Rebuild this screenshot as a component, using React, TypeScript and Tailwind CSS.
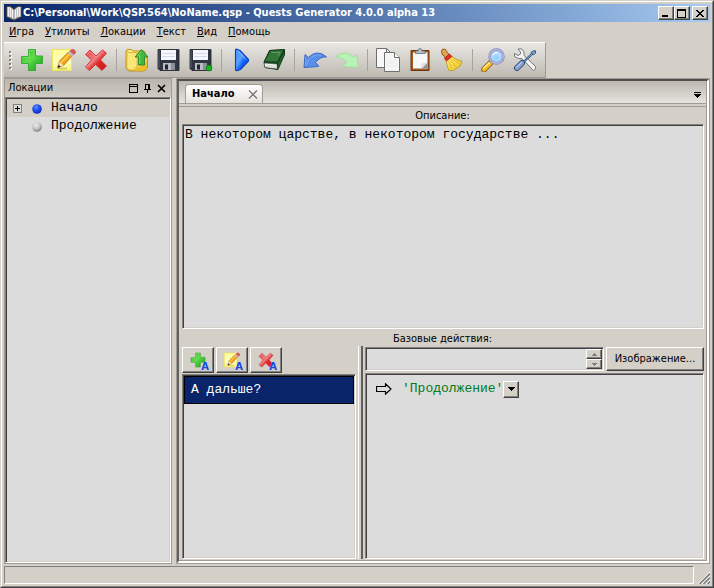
import { useState } from 'react'
import type { ReactNode } from 'react'

// Classic 3D edges
const RAISED = 'border border-t-white border-l-white border-r-[#404040] border-b-[#404040] shadow-[inset_-1px_-1px_0_#808080]'
const SUNKEN = 'border border-t-[#808080] border-l-[#808080] border-r-white border-b-white shadow-[inset_1px_1px_0_#404040,inset_-1px_-1px_0_#d4d0c8]'
const UI_FONT = "font-['DejaVu_Sans_Condensed','DejaVu_Sans',sans-serif]"
const MONO_FONT = "font-['Liberation_Mono','Courier_New',monospace]"

function Svg({ size = 24, children }: { size?: number; children: ReactNode }) {
  return (
    <svg width={size} height={size} viewBox="0 0 24 24" aria-hidden="true" className="block shrink-0">
      {children}
    </svg>
  )
}

const Defs = () => (
  <svg width="0" height="0" className="absolute" aria-hidden="true">
    <defs>
      <linearGradient id="green" x1="0" y1="0" x2="1" y2="1">
        <stop offset="0" stopColor="#2fb52e" />
        <stop offset=".45" stopColor="#63dc4c" />
        <stop offset=".65" stopColor="#3fc436" />
        <stop offset="1" stopColor="#1f9c22" />
      </linearGradient>
      <linearGradient id="red" x1="0" y1="0" x2="1" y2="1">
        <stop offset="0" stopColor="#e2484c" />
        <stop offset=".45" stopColor="#f07b7b" />
        <stop offset=".6" stopColor="#dc2a2c" />
        <stop offset="1" stopColor="#cf1013" />
      </linearGradient>
      <linearGradient id="note" x1="0" y1="0" x2="0" y2="1">
        <stop offset="0" stopColor="#fdfd9a" />
        <stop offset=".6" stopColor="#fdfdc0" />
        <stop offset="1" stopColor="#f8f27a" />
      </linearGradient>
      <linearGradient id="gold" x1="0" y1="0" x2="1" y2="1">
        <stop offset="0" stopColor="#fdf08a" />
        <stop offset="1" stopColor="#f0c02c" />
      </linearGradient>
      <linearGradient id="blue" x1="0" y1="0" x2="1" y2="1">
        <stop offset="0" stopColor="#3d8bff" />
        <stop offset=".4" stopColor="#5aa4ff" />
        <stop offset=".6" stopColor="#1262f5" />
        <stop offset="1" stopColor="#0a55ee" />
      </linearGradient>
      <linearGradient id="broom" x1="0" y1="0" x2="1" y2="1">
        <stop offset="0" stopColor="#fff07a" />
        <stop offset="1" stopColor="#efc51c" />
      </linearGradient>
      <radialGradient id="lens" cx=".5" cy=".6" r=".6">
        <stop offset="0" stopColor="#8accff" />
        <stop offset="1" stopColor="#d4ecff" />
      </radialGradient>
      <radialGradient id="ballBlue" cx=".4" cy=".3" r=".7">
        <stop offset="0" stopColor="#5f8cff" />
        <stop offset=".5" stopColor="#1f50f0" />
        <stop offset="1" stopColor="#0a2bb8" />
      </radialGradient>
      <radialGradient id="ballGray" cx=".4" cy=".3" r=".7">
        <stop offset="0" stopColor="#ececec" />
        <stop offset=".6" stopColor="#c0c0c0" />
        <stop offset="1" stopColor="#808080" />
      </radialGradient>
    </defs>
  </svg>
)

const AddIcon = ({ size }: { size?: number }) => (
  <Svg size={size}>
    <path d="M8.500 1.500H15.500V8H22.500V15.500H15.500V22.500H8.500V15.500H1.500V8.500H8.500z" fill="url(#green)" stroke="#2fa82f" strokeWidth=".9" />
    <path d="M9.500 9.500V2.500H14.500M2.500 9.500H9.500" fill="none" stroke="#7fe06c" strokeWidth=".8" />
  </Svg>
)

const EditIcon = ({ size }: { size?: number }) => (
  <Svg size={size}>
    <path d="M.5 1.500H19.500V22.500H.5z" fill="url(#note)" stroke="#ebe25a" />
    <path d="M6 20.500h9" stroke="#cfc66a" strokeWidth="1.500" />
    <path d="M5.500 20L7.500 13L16.500 4L20.500 7.500L11.500 17.500z" fill="#f5a31c" stroke="#a8690f" strokeWidth=".7" />
    <path d="M9 14.500L18 5.500" stroke="#ffd35c" strokeWidth="1.500" />
    <path d="M5.500 20L7.500 13.500L11.500 17.500z" fill="#f6dfb4" />
    <path d="M5.500 20L6.500 16.800L8.800 18.800z" fill="#222" />
    <path d="M16 4.500L18 2.500L22 6L20 8.500z" fill="#b4bccb" />
    <path d="M18 2.800Q20.500 .5 22.700 2.300T22 6.500z" fill="#e4525a" stroke="#b93840" strokeWidth=".6" />
  </Svg>
)

const DeleteIcon = ({ size }: { size?: number }) => (
  <Svg size={size}>
    <path
      d="M1.500 6.500L6 2L12 8L18.500 2L22.500 5L16.500 12L22.500 18L18 22.500L11.500 16.500L5.500 22.500L1.500 19L7.500 12z"
      fill="url(#red)"
      stroke="#d63a3e"
      strokeWidth="1"
      strokeLinejoin="round"
    />
    <path d="M3 6.500L6 3.500L12 9.500L18.500 3.500M3 19L9 12.500" fill="none" stroke="#f49a9a" strokeWidth=".8" />
  </Svg>
)

const OpenIcon = () => (
  <Svg>
    <path d="M1 3L2 1.500H6.500L8 3H19L20 4.500V8L22.500 10V20L19 23H4L1 20.500z" fill="url(#gold)" stroke="#c0921a" strokeWidth="1" />
    <path d="M2 3L4 4.500H12V20L10 22H4L1.800 20z" fill="#fbe778" stroke="#cfa12a" strokeWidth=".7" />
    <path d="M9.500 19Q14 21 18 17L22 14V20L19 22.500H10z" fill="#f0c02c" />
    <path d="M16.500 1.500L23 9H19.500V17H13.500V9H10z" fill="#40b83c" stroke="#23872a" strokeWidth=".9" />
    <path d="M16.500 3.500L12.800 8H14.800V16" stroke="#86dd74" fill="none" strokeWidth=".9" />
  </Svg>
)

const Disk = () => (
  <>
    <path d="M1 1.500H22V22.500H3L1 20.500z" fill="#303642" stroke="#1c2028" strokeWidth=".8" />
    <path d="M2 2.500V20" stroke="#59616e" />
    <path d="M4 2H19V12H4z" fill="#f6f8fc" />
    <path d="M5 5.500H18M5 8.500H18" stroke="#d3dbea" />
    <path d="M6 15H18V22H6z" fill="#b9bcc2" />
    <path d="M14 15H18V22H14z" fill="#8c9099" />
    <path d="M8 16.500H11V21.500H8z" fill="#20242c" />
  </>
)

const SaveIcon = () => (
  <Svg>
    <Disk />
  </Svg>
)

const SaveAsIcon = () => (
  <Svg>
    <Disk />
    <circle cx="20" cy="20" r="2.900" fill="#18b51c" stroke="#0d7d10" strokeWidth=".8" />
  </Svg>
)

const PlayIcon = () => (
  <Svg>
    <path d="M5.500 2Q5.500 .8 7 1.300L10 2.500L18.500 11.500V13L10.500 21.500L7 22.800Q5.500 23 5.500 21.500z" fill="url(#blue)" stroke="#0a3bc0" strokeWidth="1.100" />
    <path d="M7 3Q12 6 16 11.500" stroke="#8fc0ff" fill="none" strokeWidth=".9" />
  </Svg>
)

const BookIcon = () => (
  <Svg>
    <path d="M2 14L7.500 2.500L22.500 1.500V6L15.500 21.500L3 19.500z" fill="#184b22" stroke="#0b2811" strokeWidth=".9" />
    <path d="M8 2.500L22 1.800L15.500 14L2.500 13.500z" fill="#34753a" stroke="#123a19" strokeWidth=".8" />
    <path d="M9.500 4.500H18L16 8" stroke="#5f9a62" fill="none" />
    <path d="M2.500 15L15 16L15.500 21L3.500 19.500Q1.500 17 2.500 15z" fill="#f4f4ef" stroke="#3b493c" strokeWidth=".6" />
    <path d="M4 17L15 18.200M4 18.500L15 19.700" stroke="#b5bab0" strokeWidth=".5" />
    <path d="M15.500 15L22.500 3V7L16 21.500z" fill="#255f2d" stroke="#0f3216" strokeWidth=".6" />
  </Svg>
)

const Curve = 'M2 6.500L5.500 9.500Q9 5.500 14 5T23.500 9Q17 8.500 12.500 14.500L15.500 17.500V18.500L1 19.500z'

const UndoIcon = () => (
  <Svg>
    <path d={Curve} fill="#5a8ee8" stroke="#3560c4" strokeWidth=".9" strokeLinejoin="round" />
    <path d="M2.800 9V17.500L6 11.500Q11 6 18 7" fill="none" stroke="#83aef5" strokeWidth=".8" />
  </Svg>
)

const RedoIcon = () => (
  <Svg>
    <g transform="matrix(-1 0 0 1 24 0)">
      <path d={Curve} fill="#b8f2b4" stroke="#9cdc98" strokeWidth=".9" strokeLinejoin="round" />
    </g>
  </Svg>
)

const CopyIcon = () => (
  <Svg>
    <path d="M.5 .5H10.500L14.500 4.500V19.500H.5z" fill="#f8f8f8" stroke="#6e6e6e" />
    <path d="M10.500 .5V4.500H14.500" fill="none" stroke="#6e6e6e" />
    <path d="M8.500 4.500H18.500L23.500 9.500V23.500H8.500z" fill="#f5f5f5" stroke="#6e6e6e" />
    <path d="M18.500 4.500V9.500H23.500" fill="#fff" stroke="#6e6e6e" />
    <path d="M11 12H21M11 15H21M11 18H21" stroke="#ececec" />
  </Svg>
)

const PasteIcon = () => (
  <Svg>
    <path d="M3 2.500H21V22.500H3z" fill="#a5581c" stroke="#6c350c" />
    <path d="M5 4.500H19.500V20.500H5z" fill="#f7f7f7" />
    <path d="M13.500 20.500L19.500 14.500V20.500z" fill="#8f959d" />
    <path d="M13.500 20.500V15.500L19.500 14.500z" fill="#dcdfe3" />
    <path d="M7.500 5.500V3H10Q10 .5 12 .5T14 3H17V5.500z" fill="#b9bec6" stroke="#636973" strokeWidth=".8" />
  </Svg>
)

const BroomIcon = () => (
  <Svg>
    <path d="M1.500 4L2 1.500L5 1L9 6.500L5 10Q4.500 7 2.500 7z" fill="#e0a254" stroke="#91571b" strokeWidth=".9" />
    <path d="M6 13L11 8Q16 12 22 13.500L20 18L13 22.500H9Q7 18 6 13z" fill="url(#broom)" stroke="#c09a18" strokeWidth=".9" />
    <path d="M8.500 13L12 21M10.500 11.500L16 19M12.500 11L19.500 16" stroke="#d9b021" strokeWidth=".8" fill="none" />
    <path d="M4.500 10.500L9.500 6L12 8.500L6.500 13z" fill="#ec2c22" stroke="#9d1a14" strokeWidth=".7" />
  </Svg>
)

const SearchIcon = () => (
  <Svg>
    <path d="M3 21.500L9 15.500" stroke="#85601c" strokeWidth="6" strokeLinecap="round" />
    <path d="M3 21.500L9 15.500" stroke="#f2b622" strokeWidth="4.400" strokeLinecap="round" />
    <path d="M2.500 20.500L8.500 14.500" stroke="#fff0a8" strokeWidth="1.400" />
    <circle cx="15.500" cy="8.500" r="6.800" fill="url(#lens)" stroke="#7f82bd" strokeWidth="2.800" />
    <circle cx="15.500" cy="8.500" r="6.800" fill="none" stroke="#bcbfe6" strokeWidth="1.300" />
    <path d="M11.500 7.500Q12.500 4.500 16 4.500" stroke="#fff" fill="none" />
  </Svg>
)

const ToolsIcon = () => (
  <Svg>
    <path
      d="M5 1L8.500 .8L11 4V7.500L22.500 18.500Q23.500 21 20.500 22.500L9 10.500H5.500L1.500 8.500V5.500L5 7.500L7.500 6V4z"
      fill="#f5f5f5"
      stroke="#676b72"
      strokeWidth=".9"
    />
    <path d="M10.500 14L19.500 5.500" stroke="#315786" strokeWidth="2.400" />
    <path d="M11 13.500L19.500 5.500" stroke="#a9c6e8" strokeWidth=".7" />
    <path d="M18 4.500L20.500 2.800H22.500V5L20.500 7z" fill="#7fa2d0" stroke="#26497c" strokeWidth=".9" />
    <path d="M4 20L9 15" stroke="#274877" strokeWidth="6" strokeLinecap="round" />
    <path d="M4 20L9 15" stroke="#88a4cc" strokeWidth="4.200" strokeLinecap="round" />
    <path d="M3.500 19.500L8.500 14.500" stroke="#cbdcf2" strokeWidth="1" />
  </Svg>
)

const toolGroups = [
  [
    { label: 'Добавить локацию', Icon: AddIcon },
    { label: 'Переименовать локацию', Icon: EditIcon },
    { label: 'Удалить локацию', Icon: DeleteIcon },
  ],
  [
    { label: 'Открыть', Icon: OpenIcon },
    { label: 'Сохранить', Icon: SaveIcon },
    { label: 'Сохранить как', Icon: SaveAsIcon },
  ],
  [
    { label: 'Запустить', Icon: PlayIcon },
    { label: 'Справка', Icon: BookIcon },
  ],
  [
    { label: 'Отменить', Icon: UndoIcon },
    { label: 'Повторить', Icon: RedoIcon },
  ],
  [
    { label: 'Копировать', Icon: CopyIcon },
    { label: 'Вставить', Icon: PasteIcon },
    { label: 'Очистить', Icon: BroomIcon },
  ],
  [
    { label: 'Поиск', Icon: SearchIcon },
    { label: 'Настройки', Icon: ToolsIcon },
  ],
]

const actionTools = [
  { label: 'Добавить действие', Icon: AddIcon },
  { label: 'Переименовать действие', Icon: EditIcon },
  { label: 'Удалить действие', Icon: DeleteIcon },
]

const menus = ['Игра', 'Утилиты', 'Локации', 'Текст', 'Вид', 'Помощь']

function CaptionButton({ label, children }: { label: string; children: ReactNode }) {
  return (
    <button aria-label={label} className={`flex h-[14px] w-4 items-center justify-center bg-[#d4d0c8] ${RAISED}`}>
      <svg width="10" height="9" viewBox="0 0 10 9" shapeRendering="crispEdges" aria-hidden="true">
        {children}
      </svg>
    </button>
  )
}

function TitleBar() {
  return (
    <header className="flex h-[18px] items-center bg-linear-to-r from-[#0a246a] to-[#a6caf0] pr-0.5 pl-0.5">
      <svg width="16" height="16" viewBox="0 0 16 16" aria-hidden="true" className="shrink-0">
        <path d="M.5 1.500L4 1L8 4L12 1L15.500 1.500V12L8 15.500L.5 12z" fill="#777" stroke="#333" strokeWidth=".7" />
        <path d="M1.500 2L4 2L7.500 5V14L4 12L1.500 11.500zM14.500 2L12 2L8.500 5V14L12 12L14.500 11.500z" fill="#f3f3f3" />
        <path d="M3.500 2V12M5.500 3.500V13M10.500 3.500V13M12.500 2V12" stroke="#aaa" strokeWidth=".7" />
      </svg>
      <h1 className="flex-1 truncate pl-px font-bold text-white">
        C:\Personal\Work\QSP.564\NoName.qsp - Quests Generator 4.0.0 alpha 13
      </h1>
      <CaptionButton label="Свернуть">
        <path d="M1 6h6v2H1z" />
      </CaptionButton>
      <CaptionButton label="Развернуть">
        <path d="M0 0h9v9H0zM1 2v6h7V2z" fillRule="evenodd" />
      </CaptionButton>
      <div className="w-0.5" />
      <CaptionButton label="Закрыть">
        <path d="M1 1h2v1h1v1h2V2h1V1h2v1H8v1H7v1H6v1h1v1h1v1h1v1H7V7H6V6H4v1H3v1H1V7h1V6h1V5h1V4H3V3H2V2H1z" />
      </CaptionButton>
    </header>
  )
}

function Toolbar() {
  return (
    <div className="flex">
      <div
        role="toolbar"
        className="flex h-9 items-center border-t border-r border-b border-t-white border-r-[#9d9a93] border-b-[#9d9a93] bg-linear-to-b from-[#e9e7e3] to-[#bebab2] pr-1"
      >
        <div className="flex w-3 flex-col items-center gap-0.5">
          {[0, 1, 2, 3, 4].map((i) => (
            <i key={i} className="block size-0.5 bg-[#85827b] shadow-[1px_1px_0_#fff]" />
          ))}
        </div>
        {toolGroups.map((group, i) => (
          <div key={i} className="flex items-center">
            {i > 0 && <div className="mx-1 h-[22px] w-px bg-[#a8a49c]" />}
            {group.map(({ label, Icon }) => (
              <button key={label} aria-label={label} className="flex h-8 w-8 items-center justify-center">
                <Icon />
              </button>
            ))}
          </div>
        ))}
      </div>
    </div>
  )
}

function LocationsPanel() {
  return (
    <aside className="flex w-[168px] shrink-0 flex-col border border-[#a09c94]">
      <div className="flex h-[18px] items-center bg-linear-to-b from-[#b9b5ad] to-[#d0ccc4] pr-1 pl-[3px]">
        <h2 className="flex-1">Локации</h2>
        <div className="flex gap-1">
          <button aria-label="Развернуть панель" className="size-[10px]">
            <svg width="10" height="10" viewBox="0 0 10 10" shapeRendering="crispEdges" aria-hidden="true">
              <path d="M0 1h9v9H0zM1 2v1h7V2zM1 4v5h7V4z" fillRule="evenodd" />
            </svg>
          </button>
          <button aria-label="Закрепить" className="size-[10px]">
            <svg width="10" height="10" viewBox="0 0 10 10" shapeRendering="crispEdges" aria-hidden="true">
              <path d="M2 1h5v5h1v1H5v3H4V7H1V6h1zM3 2v4h2V2z" fillRule="evenodd" />
            </svg>
          </button>
          <button aria-label="Закрыть панель" className="size-[10px]">
            <svg width="10" height="10" viewBox="0 0 10 10" aria-hidden="true">
              <path d="M1 2L8 9M8 2L1 9" stroke="#000" strokeWidth="1.600" />
            </svg>
          </button>
        </div>
      </div>
      <ul role="tree" className={`flex-1 bg-[#dcdcdc] p-px text-[13px] leading-[18px] ${SUNKEN} ${MONO_FONT}`}>
        <li role="treeitem" aria-expanded="false" className="flex items-center bg-[#d4d0c8] pl-1.5">
          <button aria-label="Развернуть" className="mr-[9px]">
            <svg width="9" height="9" viewBox="0 0 9 9" shapeRendering="crispEdges" aria-hidden="true">
              <path d="M.5 .5h8v8h-8z" fill="#dcdcdc" stroke="#808080" />
              <path d="M2 4.500h5M4.500 2v5" stroke="#000" />
            </svg>
          </button>
          <svg width="12" height="12" viewBox="0 0 12 12" aria-hidden="true" className="mr-2">
            <circle cx="6" cy="7" r="4.800" fill="url(#ballBlue)" />
          </svg>
          Начало
        </li>
        <li role="treeitem" className="flex items-center pl-6">
          <svg width="12" height="12" viewBox="0 0 12 12" aria-hidden="true" className="mr-2">
            <circle cx="6" cy="7" r="4.800" fill="url(#ballGray)" />
          </svg>
          Продолжение
        </li>
      </ul>
    </aside>
  )
}

function TabStrip() {
  return (
    <div className="flex h-[23px] items-end justify-between border-b border-[#a09c94] bg-linear-to-b from-[#bcb8b0] to-[#e6e4df] pr-1 pl-1.5">
      <div className="flex h-[19px] items-center rounded-t-sm border border-b-0 border-[#a09c94] bg-linear-to-b from-white to-[#e6e3de] pr-1 pl-1.5">
        <button className="w-14 text-left font-bold">Начало</button>
        <button aria-label="Закрыть вкладку">
          <svg width="10" height="10" viewBox="0 0 10 10" aria-hidden="true">
            <path d="M1 1.500L9 9.500M9 1.500L1 9.500" stroke="#777" strokeWidth="1.300" />
          </svg>
        </button>
      </div>
      <button aria-label="Список вкладок" className="mb-1">
        <svg width="9" height="7" viewBox="0 0 9 7" shapeRendering="crispEdges" aria-hidden="true">
          <path d="M1 0h7v1H1zM1 2h7v1H7v1H6v1H5v1H4V5H3V4H2V3H1z" />
        </svg>
      </button>
    </div>
  )
}

function ActionsPane() {
  const [selected, setSelected] = useState(0)
  const actions = ['А дальше?']

  return (
    <div className="flex w-[180px] shrink-0 flex-col border-r border-white pt-px pr-0.5 pl-[3px]">
      <div className="mb-px flex gap-0.5">
        {actionTools.map(({ label, Icon }) => (
          <button key={label} aria-label={label} className={`relative flex h-[26px] w-8 items-center justify-center ${RAISED}`}>
            <Icon size={16} />
            <span className="absolute right-1 bottom-0 text-[11px] leading-[10px] font-bold text-[#1447e6]">A</span>
          </button>
        ))}
      </div>
      <ul className={`flex-1 bg-[#dcdcdc] p-px ${SUNKEN}`}>
        {actions.map((name, i) => (
          <li key={name}>
            <button
              onClick={() => setSelected(i)}
              className={`h-7 w-full pl-1.5 text-left text-[13px] ${MONO_FONT} ${
                selected === i ? 'border border-black bg-[#0a246a] text-white' : 'text-black'
              }`}
            >
              {name}
            </button>
          </li>
        ))}
      </ul>
    </div>
  )
}

function SpinButton({ label, path }: { label: string; path: string }) {
  return (
    <button aria-label={label} className={`flex h-[10px] w-4 items-center justify-center bg-[#d4d0c8] ${RAISED}`}>
      <svg width="5" height="3" viewBox="0 0 5 3" shapeRendering="crispEdges" aria-hidden="true">
        <path d={path} fill="#808080" />
      </svg>
    </button>
  )
}

function CodePane() {
  return (
    <div className="flex min-w-0 flex-1 flex-col border-l-2 border-[#606060] pt-px pl-0.5">
      <div className="mb-0.5 flex gap-0.5">
        <div className={`flex h-6 flex-1 bg-[#dcdcdc] p-px ${SUNKEN}`}>
          <input aria-label="Путь к изображению" className="min-w-0 flex-1 px-1 outline-none" />
          <div className="flex flex-col">
            <SpinButton label="Вверх" path="M2 0h1v1h1v1h1v1H0V2h1V1h1z" />
            <SpinButton label="Вниз" path="M0 0h5v1H4v1H3v1H2V2H1V1H0z" />
          </div>
        </div>
        <button className={`h-6 w-[98px] ${RAISED}`}>Изображение...</button>
      </div>
      <div className={`flex-1 bg-[#dcdcdc] p-1.5 ${SUNKEN}`}>
        <div className="flex h-[18px] items-center pl-1">
          <svg width="16" height="12" viewBox="0 0 16 12" aria-hidden="true">
            <path d="M.5 3.500H9.500V.8L15 6L9.500 11.200V8.500H.5z" fill="none" stroke="#000" strokeWidth="1.200" />
          </svg>
          <span className={`pl-2.5 text-[13px] text-[#007a1c] ${MONO_FONT}`}>'Продолжение'</span>
          <button aria-label="Выбрать локацию" className={`flex h-[17px] w-4 items-center justify-center bg-[#d4d0c8] ${RAISED}`}>
            <svg width="7" height="4" viewBox="0 0 7 4" shapeRendering="crispEdges" aria-hidden="true">
              <path d="M0 0h7v1H6v1H5v1H4v1H3V3H2V2H1V1H0z" />
            </svg>
          </button>
        </div>
      </div>
    </div>
  )
}

function Editor() {
  return (
    <main className="flex min-w-0 flex-1 flex-col border border-[#a09c94]">
      <div className="flex flex-1 flex-col border-t-2 border-r-2 border-b-2 border-l-2 border-t-[#505050] border-r-white border-b-white border-l-[#606060]">
        <div className="flex flex-1 flex-col border-r border-b border-[#a09c94]">
          <TabStrip />
          <div className="mt-0.5 flex flex-1 flex-col border-t border-[#a09c94]">
            <label htmlFor="description" className="h-[17px] pt-px text-center leading-4">
              Описание:
            </label>
            <div className="flex flex-[206] pr-0.5 pl-[3px]">
              <textarea
                id="description"
                spellCheck={false}
                defaultValue="В некотором царстве, в некотором государстве ..."
                className={`w-full resize-none bg-[#dcdcdc] px-0.5 pt-0.5 text-[13px] leading-[15px] outline-none ${SUNKEN} ${MONO_FONT}`}
              />
            </div>
            <h2 className="h-[17px] pt-0.5 text-center leading-4">Базовые действия:</h2>
            <div className="flex flex-[214] gap-0.5 pr-0.5 pb-px">
              <ActionsPane />
              <CodePane />
            </div>
          </div>
        </div>
      </div>
    </main>
  )
}

export default function App() {
  return (
    <div className={`flex min-h-screen flex-col border border-[#d4d0c8] border-r-[#404040] border-b-[#404040] bg-[#d4d0c8] text-[11px] leading-4 text-black ${UI_FONT}`}>
      <Defs />
      <div className="flex flex-1 flex-col border border-t-white border-r-[#808080] border-b-[#808080] border-l-white p-0.5">
        <TitleBar />
        <nav className="flex h-5 items-center gap-px">
          {menus.map((menu) => (
            <button key={menu} className="px-[5px]">
              <span className="underline">{menu[0]}</span>
              {menu.slice(1)}
            </button>
          ))}
        </nav>
        <Toolbar />
        <div className="flex flex-1 gap-1">
          <LocationsPanel />
          <Editor />
        </div>
        <footer className="mt-0.5 flex h-[18px] gap-1">
          <div className="flex-1 border border-t-[#808080] border-r-white border-b-white border-l-[#808080]" />
          <svg width="12" height="12" viewBox="0 0 12 12" aria-hidden="true" className="self-end">
            <path d="M0 12L12 0M4 12L12 4M8 12L12 8" stroke="#fff" />
            <path d="M1.500 12L12 1.500M5.500 12L12 5.500M9.500 12L12 9.500" stroke="#808080" strokeWidth="1.600" />
          </svg>
        </footer>
      </div>
    </div>
  )
}
